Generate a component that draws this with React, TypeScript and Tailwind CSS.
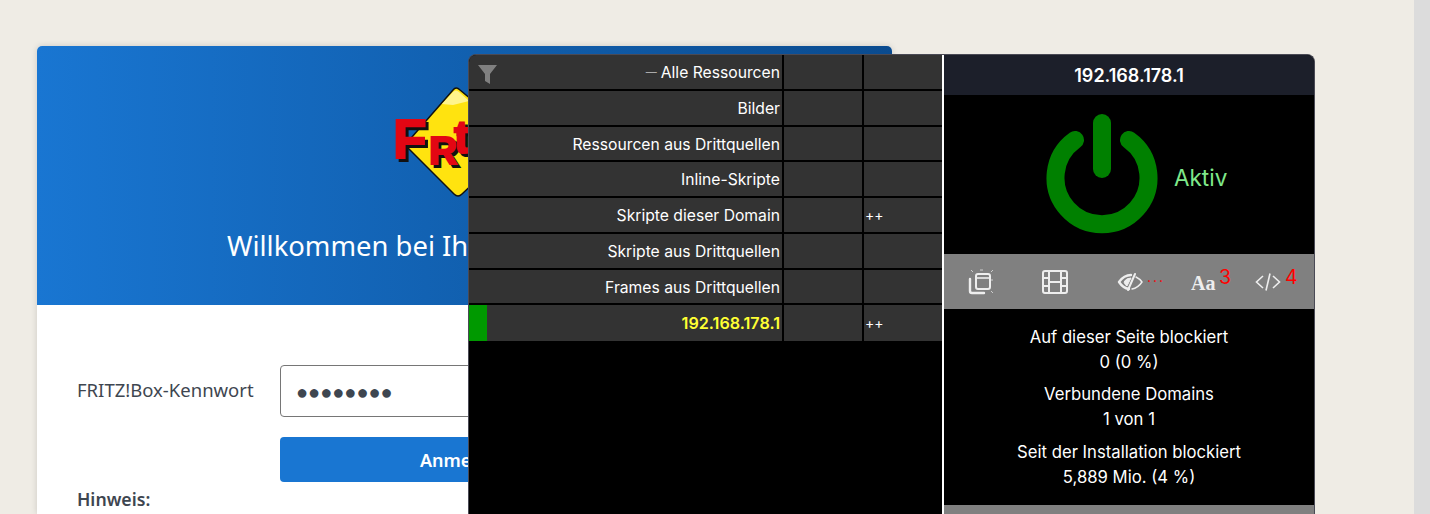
import React from 'react';

const rows = [
  { label: 'Alle Ressourcen', dash: true, c3: '' },
  { label: 'Bilder', c3: '' },
  { label: 'Ressourcen aus Drittquellen', c3: '' },
  { label: 'Inline-Skripte', c3: '' },
  { label: 'Skripte dieser Domain', c3: '++' },
  { label: 'Skripte aus Drittquellen', c3: '' },
  { label: 'Frames aus Drittquellen', c3: '' },
];

function FritzLogo() {
  return (
    <svg width="140" height="125" viewBox="0 0 140 125" className="absolute left-[348px] top-[34px]">
      <path d="M20 65 L68 10 Q71 6 75 10 L130 56 Q134 60 130 64 L77 114 Q73 118 69 114 Z" fill="#ffe30f" stroke="#111" strokeWidth="1.5" strokeLinejoin="round" />
      <path d="M57 24 L68 12 Q71 9 74 12 L84 21 L68 25 Z" fill="#fff48c" />
      <g fontFamily="'Liberation Sans', sans-serif" fontWeight="700">
        <text x="11" y="81" fontSize="55" fill="#111" stroke="#111" strokeWidth="2">F</text>
        <text x="8" y="78" fontSize="55" fill="#e30613" stroke="#e30613" strokeWidth="2">F</text>
        <text x="47" y="87" fontSize="39" fill="#111" stroke="#111" strokeWidth="2">R</text>
        <text x="44" y="84" fontSize="39" fill="#e30613" stroke="#e30613" strokeWidth="2">R</text>
        <text x="72" y="76" fontSize="46" fill="#111" stroke="#111" strokeWidth="2">t</text>
        <text x="69" y="73" fontSize="46" fill="#e30613" stroke="#e30613" strokeWidth="2">t</text>
      </g>
    </svg>
  );
}

function PowerIcon() {
  return (
    <svg width="112" height="122" viewBox="0 0 112 122">
      <path d="M29 27 A46.5 46.5 0 1 0 83 27" fill="none" stroke="#008000" strokeWidth="18" strokeLinecap="round" />
      <path d="M56 10 V56" fill="none" stroke="#008000" strokeWidth="18" strokeLinecap="round" />
    </svg>
  );
}

function FilterIcon() {
  return (
    <svg width="20" height="20" viewBox="0 0 20 20" className="absolute left-[9px] top-[10px]">
      <path d="M0 0 H19 L12 9 V19 L7 16 V9 Z" fill="#808080" />
    </svg>
  );
}

function ZapperIcon() {
  return (
    <svg width="26" height="26" viewBox="0 0 26 26" fill="none" stroke="#eeeeee">
      <rect x="8" y="5" width="14" height="15" rx="2" strokeWidth="2" />
      <path d="M8 9 H22" strokeWidth="1.6" />
      <path d="M2 10 V22 Q2 24 4 24 H16" strokeWidth="2.4" strokeLinecap="round" />
      <path d="M3 1 L5 3 M25 1 L23 3 M25 24 L23 22 M12 1 H15 M24 10 V12" strokeWidth="1" opacity="0.7" />
    </svg>
  );
}

function FilmIcon() {
  return (
    <svg width="26" height="24" viewBox="0 0 26 24" fill="none" stroke="#eeeeee" strokeWidth="2">
      <rect x="1" y="1" width="24" height="22" rx="2" />
      <path d="M7 1 V23 M19 1 V23 M1 8 H7 M1 16 H7 M19 8 H25 M19 16 H25 M7 12 H19" />
    </svg>
  );
}

function EyeSlashIcon() {
  return (
    <svg width="26" height="20" viewBox="0 0 26 20" fill="none" stroke="#eeeeee">
      <path d="M2 10 Q7 3 14 3 M12 17 Q6 16 2 10" strokeWidth="2.4" strokeLinecap="round" />
      <path d="M7 10 Q9 6 14 6 L10 14 Q8 13 7 10 Z" fill="#eeeeee" strokeWidth="1" />
      <path d="M18 2 L11 18" strokeWidth="2" strokeLinecap="round" />
      <path d="M19 5 Q23 7 25 10 Q21 16 15 17" strokeWidth="1.4" strokeLinecap="round" />
    </svg>
  );
}

function CodeIcon() {
  return (
    <svg width="26" height="20" viewBox="0 0 26 20" fill="none" stroke="#eeeeee" strokeWidth="1.6">
      <path d="M8 4 L1.5 10 L8 16 M18 4 L24.5 10 L18 16 M15 1.5 L11 18.5" />
    </svg>
  );
}

function Popup() {
  return (
    <div className="absolute left-[468px] top-[54px] w-[847px] h-[460px] flex rounded-tl-[8px] rounded-tr-[8px] overflow-hidden border-t border-x border-[#4a4a55] bg-black font-['Inter',sans-serif] text-white">
      <div className="relative w-[473px] flex flex-col shrink-0">
        <FilterIcon />
        {rows.map((r) => (
          <div key={r.label} className="flex h-[35.75px] border-b-2 border-black">
            <div className="w-[313px] pr-[2px] pt-[2px] flex items-center justify-end bg-[#333333] text-[15.7px] leading-none">
              {r.dash && <span className="text-[#aaaaaa] text-[11px] mr-[4px]">—</span>}
              {r.label}
            </div>
            <div className="w-[78px] ml-[2px] bg-[#333333]" />
            <div className="w-[78px] ml-[2px] pl-[1px] bg-[#333333] flex items-center text-[14px] leading-none">{r.c3}</div>
          </div>
        ))}
        <div className="flex h-[35.75px]">
          <div className="w-[313px] flex bg-[#333333]">
            <div className="w-[18px] bg-[#009900]" />
            <div className="flex-1 pr-[2px] flex items-center justify-end text-[16.2px] font-semibold text-[#ffff33] leading-none">192.168.178.1</div>
          </div>
          <div className="w-[78px] ml-[2px] bg-[#333333]" />
          <div className="w-[78px] ml-[2px] pl-[1px] bg-[#333333] flex items-center text-[14px] leading-none">++</div>
        </div>
      </div>
      <div className="w-[2px] bg-white shrink-0" />
      <div className="flex-1 flex flex-col">
        <div className="h-[40px] bg-[#1c1f2a] flex items-center justify-center text-[18px] font-semibold">192.168.178.1</div>
        <div className="h-[159px] bg-black flex items-center pl-[102px] pb-[1px]">
          <PowerIcon />
          <span className="ml-[16px] text-[#7fe88a] text-[22.5px] leading-none mt-[9px]">Aktiv</span>
        </div>
        <div className="h-[55px] bg-[#808080] flex items-center pl-[24px]">
          <ZapperIcon />
          <div className="ml-[48px]"><FilmIcon /></div>
          <div className="ml-[49px]"><EyeSlashIcon /></div>
          <span className="ml-[4px] w-[16px] text-[#ff0000] text-[14px] leading-none tracking-[2px] mt-[-2px]">···</span>
          <span className="ml-[28px] w-[25px] text-[#eeeeee] text-[20px] leading-none font-bold font-['Liberation_Serif',serif] mt-[3px]">Aa</span>
          <span className="ml-[3px] w-[12px] text-[#ff0000] text-[19.5px] leading-none mt-[-8px]">3</span>
          <div className="ml-[24px]"><CodeIcon /></div>
          <span className="ml-[4px] text-[#ff0000] text-[19.5px] leading-none mt-[-8px]">4</span>
        </div>
        <div className="flex-1 bg-black flex flex-col items-center pt-[16px] text-[16.7px] leading-[25px]">
          <div>Auf dieser Seite blockiert</div>
          <div className="mb-[7px]">0 (0 %)</div>
          <div>Verbundene Domains</div>
          <div className="mb-[8px]">1 von 1</div>
          <div>Seit der Installation blockiert</div>
          <div>5,889 Mio. (4 %)</div>
        </div>
        <div className="h-[9px] bg-[#808080] shrink-0" />
      </div>
    </div>
  );
}

export default function App() {
  return (
    <div className="relative w-[1430px] h-[514px] overflow-hidden flex bg-[#efece5] font-['Noto_Sans',sans-serif]">
      <div className="flex-1 pl-[37px] pt-[46px]">
        <div className="w-[855px] h-[468px] bg-white rounded-t-[5px] shadow-[0_0_6px_rgba(0,0,0,0.15)] overflow-hidden">
          <div className="relative h-[259px] bg-gradient-to-r from-[#1976d2] to-[#0a4b8f] text-white">
            <FritzLogo />
            <div className="absolute left-[190px] top-[186px] text-[27.4px] leading-none whitespace-nowrap">Willkommen bei Ihrer FRITZ!Box</div>
          </div>
          <div className="pl-[40px] pt-[60px]">
            <div className="flex items-center">
              <label className="w-[203px] text-[18.5px] leading-none mt-[-2px] text-[#3e4650]">FRITZ!Box-Kennwort</label>
              <div className="w-[400px] h-[52px] border border-[#767676] rounded-[4px] pl-[15px] pt-[1px] flex items-center text-[#3e4650] text-[20px]">
                ●●●●●●●●
              </div>
            </div>
            <div className="flex mt-[20px]">
              <div className="ml-[203px] w-[400px] h-[45px] bg-[#1976d2] rounded-[4px] pt-[1px] text-white text-[18px] font-semibold flex items-center pl-[140px]">Anmelden</div>
            </div>
            <div className="mt-[4px] text-[17.7px] font-semibold text-[#3e4650]">Hinweis:</div>
          </div>
        </div>
      </div>
      <div className="w-[16px] bg-[#dcdcdc] shrink-0" />
      <Popup />
    </div>
  );
}
